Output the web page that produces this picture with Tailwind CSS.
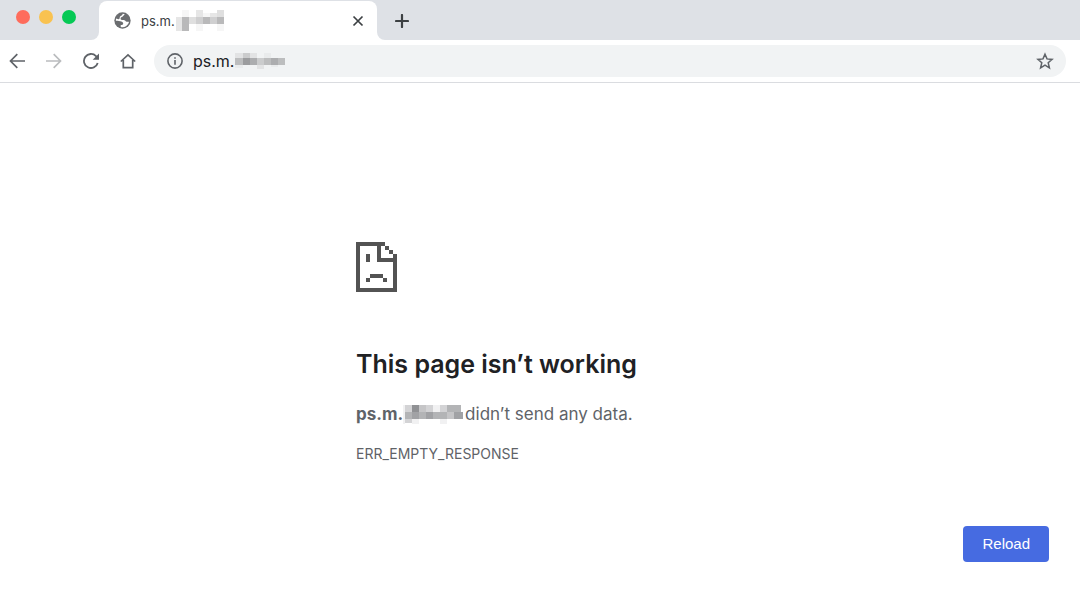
<!DOCTYPE html>
<html lang="en">
<head>
<meta charset="utf-8">
<title>This page isn’t working</title>
<script src="https://cdn.jsdelivr.net/npm/@tailwindcss/browser@4"></script>
</head>
<body class="min-h-screen bg-white font-['Inter','Liberation_Sans',sans-serif] text-[#202124]">
<header>
  <!-- tab strip -->
  <div class="flex h-10">
    <div class="flex w-[99px] shrink-0 gap-[9px] rounded-br-lg bg-[#dee1e6] pt-[10px] pl-4">
      <button aria-label="Close window" class="size-[14px] rounded-full bg-[#fe6c5c]"></button>
      <button aria-label="Minimize window" class="size-[14px] rounded-full bg-[#f9c250]"></button>
      <button aria-label="Zoom window" class="size-[14px] rounded-full bg-[#05c955]"></button>
    </div>
    <div class="w-[278px] shrink-0 bg-[#dee1e6] pt-px">
      <div class="flex h-full items-center rounded-t-lg bg-white pr-[13px] pl-[15px]">
        <svg class="size-[17px] shrink-0" viewBox="0 0 24 24" aria-hidden="true">
          <circle cx="12" cy="12" r="11.500" fill="#6b6d70"/>
          <path fill="#fff" d="M15.200 3.100L12.200 6.300C11 7.300 9.300 7.300 9.300 8.900c0 1.500.4 2.300 2 2.300 2 0 3.900-.3 4.700 1.300.6 1.300 1.700 1.600 3 1.300.8-.2 1.600-.1 2.200.2A9.500 9.500 0 0 1 9.500 21.200V18.500c2 0 3.500-.6 3.500-2.300 0-1.700-1.400-2-2.800-2.700C8.500 12.600 6 12.300 2.600 12.200c0-1 .2-2 .5-2.900l3 .8c1.400.3 2-1 2-2.300 0-2 1.600-2.300 2.800-2.900.9-.5 1-1.500 1.500-2.300z"/>
        </svg>
        <span class="ml-[10px] text-[13px] leading-5 text-[#3c4043]">ps.m.</span>
        <svg class="ml-px h-[21px] w-[48px] shrink-0" viewBox="0 0 48 21" shape-rendering="crispEdges" aria-hidden="true">
          <path fill="#f6f6f6" d="M6 0h7v7H6zM20 14h7v7h-7zM41 14h7v7h-7zM27 3h7v4h-7z"/>
          <path fill="#e6e6e6" d="M0 7h6v14H0zM20 0h7v7h-7zM34 3h7v4h-7z"/>
          <path fill="#dfdfdf" d="M41 0h7v7h-7zM13 7h7v7h-7zM6 14h7v7H6z"/>
          <path fill="#b9b9ba" d="M6 7h7v14H6zM27 7h7v7h-7zM41 7h7v7h-7z"/>
          <path fill="#cfcfd0" d="M20 7h7v7h-7zM34 7h7v7h-7z"/>
        </svg>
        <button aria-label="Close tab" class="ml-auto text-[#3c4043]">
          <svg class="size-3" viewBox="0 0 12 12" fill="none" stroke="currentColor" stroke-width="1.700"><path d="M1.500 1.500l9 9M10.500 1.500l-9 9"/></svg>
        </button>
      </div>
    </div>
    <div class="flex flex-1 items-center rounded-bl-lg bg-[#dee1e6] pt-px pl-[18px]">
      <button aria-label="New tab" class="text-[#3c4043]">
        <svg class="size-[14px]" viewBox="0 0 14 14" fill="none" stroke="currentColor" stroke-width="2.200" stroke-linecap="round"><path d="M7 1v12M1 7h12"/></svg>
      </button>
    </div>
  </div>
  <!-- toolbar -->
  <div class="flex h-[43px] items-center border-b border-[#dadce0] pr-[14px] pl-[9px] text-[#5f6368]">
    <button aria-label="Back"><svg class="size-4" viewBox="0 0 16 16" fill="none" stroke="currentColor" stroke-width="1.700"><path d="M16 8H2M8.300 1.200L1.500 8l6.800 6.800"/></svg></button>
    <button aria-label="Forward" class="ml-[21px] text-[#babcbe]"><svg class="size-4" viewBox="0 0 16 16" fill="none" stroke="currentColor" stroke-width="1.700"><path d="M0 8h14M7.700 1.200L14.500 8l-6.800 6.800"/></svg></button>
    <button aria-label="Reload page" class="ml-[21px]"><svg class="size-4" viewBox="0 0 16 16" fill="none" stroke="currentColor" stroke-width="1.800"><path d="M14.700 9.900A7 7 0 1 1 13 3.100L13.800 4"/><path fill="currentColor" stroke="none" d="M16 .5v6.300H9.700z"/></svg></button>
    <button aria-label="Home" class="ml-[21px]"><svg class="size-4" viewBox="0 0 16 16" fill="none" stroke="currentColor" stroke-width="1.700"><path d="M.8 8.500L8 1.800l7.200 6.700M3.300 7v7.700h9.400V7"/></svg></button>
    <div class="ml-[18px] flex h-8 flex-1 items-center rounded-full bg-[#f1f3f4] pr-3 pl-[13px]">
      <button aria-label="View site information"><svg class="size-4" viewBox="0 0 16 16" fill="none" stroke="currentColor" stroke-width="1.600"><circle cx="8" cy="8" r="7.100"/><path d="M8 7v4.700M8 4.200v1.600"/></svg></button>
      <span class="ml-[10px] text-[16px] leading-5 text-[#202124]">ps.m.</span>
      <svg class="ml-px h-4 w-[50px] shrink-0" viewBox="0 0 50 16" shape-rendering="crispEdges" aria-hidden="true">
        <path fill="#e2e3e4" d="M0 0h8v5H0zM15 0h7v5h-7zM22 12h7v4h-7z"/>
        <path fill="#e9ebec" d="M29 0h7v5h-7zM0 12h8v3H0zM36 12h7v2h-7z"/>
        <path fill="#cbcccd" d="M8 0h7v5H8zM22 5h7v7h-7z"/>
        <path fill="#bcbdbe" d="M0 5h8v7H0zM29 5h7v7h-7zM43 5h7v7h-7z"/>
        <path fill="#9b9c9e" d="M8 5h7v7H8z"/>
        <path fill="#acadaf" d="M15 5h7v7h-7zM36 5h7v7h-7z"/>
      </svg>
      <button aria-label="Bookmark this tab" class="ml-auto"><svg class="size-[18px]" viewBox="0 0 18 18" fill="none" stroke="currentColor" stroke-width="1.500"><path d="M9 2.200l2 4.700 5.100.5-3.900 3.400 1.200 5L9 13.100l-4.400 2.700 1.200-5L1.900 7.400 7 6.900z"/></svg></button>
    </div>
  </div>
</header>
<main class="pt-[158px] pr-[31px] pl-[356px] text-[#5f6368]">
  <svg class="h-[51px] w-[42px]" viewBox="0 0 42 51" fill="#535353" aria-hidden="true">
    <path fill-rule="evenodd" d="M0 1h29v4h-4v12h12v-4h4v38H0zM4 5v42h33V21H21V5z"/>
    <path d="M29 5h4v4h-4zM33 9h4v4h-4zM10 13h4v8h-4zM14 33h13v4H14zM10 37h4v4h-4zM27 37h4v4h-4z"/>
  </svg>
  <h1 class="mt-[54px] text-[25px] leading-9 font-semibold text-[#202124]">This page isn’t working</h1>
  <p class="mt-5 flex items-center text-[17px] leading-6">
    <strong class="font-bold">ps.m.</strong>
    <svg class="mr-0.5 h-5 w-[60px] shrink-0" viewBox="0 0 60 20" shape-rendering="crispEdges" aria-hidden="true">
      <path fill="#f1f1f2" d="M0 1h2v19H0zM9 15h7v5H9zM30 1h7v7h-7zM37 15h7v5h-7z"/>
      <path fill="#d3d3d5" d="M2 1h7v7H2zM23 1h7v7h-7zM2 15h7v4H2zM37 1h7v7h-7z"/>
      <path fill="#909194" d="M9 1h7v7H9z"/>
      <path fill="#b3b4b6" d="M2 8h7v7H2zM16 8h7v7h-7zM30 8h14v7H30zM44 1h14v7H44z"/>
      <path fill="#a1a2a5" d="M9 8h7v7H9zM23 8h7v7h-7zM51 8h9v7H51z"/>
      <path fill="#c5c5c7" d="M16 1h7v7h-7zM44 8h7v7h-7z"/>
    </svg>
    <span>didn’t send any data.</span>
  </p>
  <p class="mt-[18px] text-[14px] leading-5">ERR_EMPTY_RESPONSE</p>
  <div class="mt-[62px] flex justify-end">
    <button class="h-9 rounded bg-[#466be1] px-[19px] font-['Liberation_Sans',sans-serif] text-[15px] leading-5 text-white">Reload</button>
  </div>
</main>
</body>
</html>
